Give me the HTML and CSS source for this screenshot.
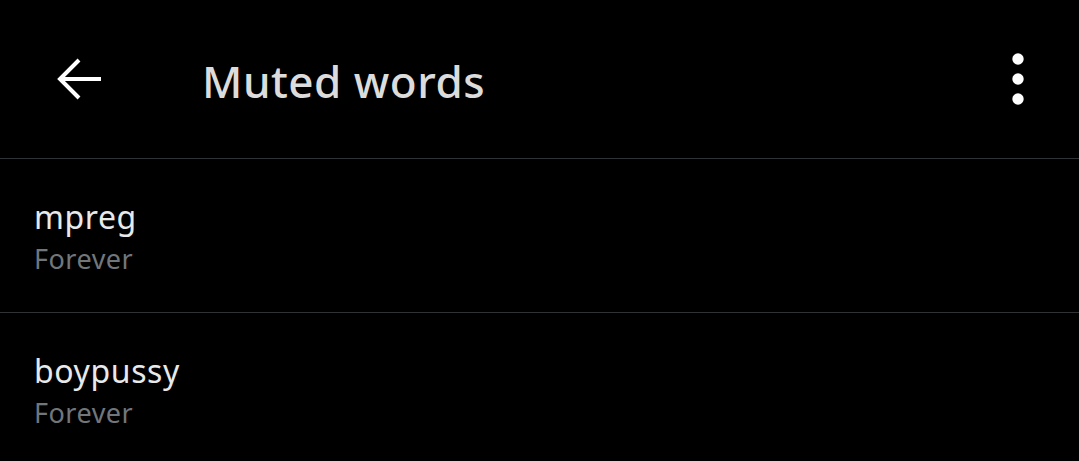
FILE: index.html
```html
<!DOCTYPE html>
<html>
<head>
<meta charset="utf-8">
<link rel="stylesheet" href="styles.css">
</head>
<body>
<div class="app">
  <header class="topbar">
    <button class="icon-btn back" aria-label="Back">
      <svg width="46" height="46" viewBox="0 0 46 46"><path d="M45 23H4M23 4L4 23L23 42" fill="none" stroke="#fff" stroke-width="4" stroke-linecap="butt" stroke-linejoin="miter"/></svg>
    </button>
    <h1 class="title">Muted words</h1>
    <button class="icon-btn more" aria-label="More">
      <svg width="12" height="52" viewBox="0 0 12 52"><circle cx="6" cy="6" r="5.7" fill="#fff"/><circle cx="6" cy="26" r="5.7" fill="#fff"/><circle cx="6" cy="46" r="5.7" fill="#fff"/></svg>
    </button>
  </header>
  <ul class="list">
    <li class="row">
      <div class="word">mpreg</div>
      <div class="dur">Forever</div>
    </li>
    <li class="row">
      <div class="word">boypussy</div>
      <div class="dur">Forever</div>
    </li>
  </ul>
</div>
</body>
</html>
```
FILE: styles.css
```css
* { box-sizing: border-box; }
html, body {
  margin: 0;
  padding: 0;
  background: #000;
  font-family: "Noto Sans", Roboto, "Liberation Sans", sans-serif;
}
.app {
  width: 1079px;
  height: 461px;
  overflow: hidden;
  background: #000;
}
.topbar {
  height: 159px;
  display: flex;
  align-items: center;
  border-bottom: 1px solid #2f3336;
  padding-bottom: 1px;
}
.icon-btn {
  background: none;
  border: 0;
  padding: 0;
  display: flex;
  align-items: center;
  justify-content: center;
}
.back {
  margin-left: 56px;
  width: 46px;
  height: 46px;
}
.title {
  margin: 0 0 0 100px;
  padding-top: 5px;
  font-size: 44px;
  line-height: 60px;
  font-weight: 500;
  letter-spacing: 0.5px;
  color: #dcdcdc;
  flex: 1;
}
.more {
  width: 12px;
  height: 52px;
  margin-right: 55px;
}
.list {
  list-style: none;
  margin: 0;
  padding: 0;
}
.row {
  padding: 38px 34px 33px;
  border-bottom: 1px solid #2f3336;
}
.word {
  font-size: 32px;
  line-height: 40px;
  letter-spacing: 0.6px;
  color: #e7e9ea;
}
.dur {
  margin-top: 2px;
  font-size: 27px;
  line-height: 40px;
  letter-spacing: 0.5px;
  color: #71767b;
}
```
